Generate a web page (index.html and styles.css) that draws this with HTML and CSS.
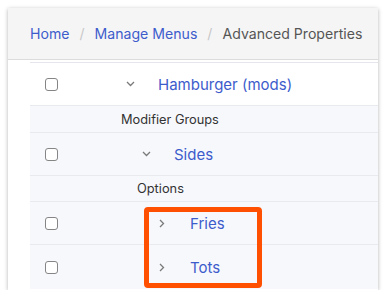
FILE: index.html
```html
<!DOCTYPE html>
<html lang="en">
<head>
    <meta charset="UTF-8">
    <meta name="viewport" content="width=device-width, initial-scale=1.0">
    <link rel="stylesheet" href="styles.css">
</head>
<body>

<div class="card">
    <div class="header">
        <a class="crumb" href="#">Home</a>
        <span class="sep">/</span>
        <a class="crumb" href="#">Manage Menus</a>
        <span class="sep">/</span>
        <span class="crumb current">Advanced Properties</span>
    </div>

    <div class="rows">
        <div class="row item white">
            <span class="check"></span>
            <span class="indent lvl0"></span>
            <span class="chev down"><svg width="9" height="6" viewBox="0 0 9 6"><path d="M1 1l3.5 3.5L8 1" fill="none" stroke="#7a7a7a" stroke-width="1.3"/></svg></span>
            <a class="name" href="#">Hamburger (mods)</a>
        </div>
        <div class="row label lvl0">Modifier Groups</div>
        <div class="row item">
            <span class="check"></span>
            <span class="indent lvl1"></span>
            <span class="chev down"><svg width="9" height="6" viewBox="0 0 9 6"><path d="M1 1l3.5 3.5L8 1" fill="none" stroke="#7a7a7a" stroke-width="1.3"/></svg></span>
            <a class="name" href="#">Sides</a>
        </div>
        <div class="row label lvl1">Options</div>
        <div class="row item">
            <span class="check"></span>
            <span class="indent lvl2"></span>
            <span class="chev"><svg width="6" height="9" viewBox="0 0 6 9"><path d="M1 1l3.5 3.5L1 8" fill="none" stroke="#7a7a7a" stroke-width="1.3"/></svg></span>
            <a class="name" href="#">Fries</a>
        </div>
        <div class="row item last">
            <span class="check"></span>
            <span class="indent lvl2"></span>
            <span class="chev"><svg width="6" height="9" viewBox="0 0 6 9"><path d="M1 1l3.5 3.5L1 8" fill="none" stroke="#7a7a7a" stroke-width="1.3"/></svg></span>
            <a class="name" href="#">Tots</a>
        </div>
    </div>

    <!-- resaltado -->
    <div class="highlight"></div>
</div>

</body>
</html>
```

FILE: styles.css
```css
body {
    margin: 0;
    background: #fff;
    font-family: 'Inter', 'Liberation Sans', sans-serif;
}

.card {
    position: relative;
    margin: 8px 0 0 8px;
    width: 370px;
    height: 282px;
    background: #fff;
    overflow: hidden;
    box-shadow: 0 1px 4px rgba(0, 0, 0, 0.3);
}

.header {
    height: 51px;
    background: #f5f5f6;
    border-bottom: 1px solid #dcdcdc;
    display: flex;
    align-items: center;
    padding-left: 22px;
    font-size: 14.1px;
    white-space: nowrap;
}

.crumb {
    color: #3d5ccc;
    text-decoration: none;
}

.crumb.current {
    color: #555;
}

.sep {
    color: #c8c8c8;
    margin: 0 10px;
}

.rows {
    margin: 2px 0 0 22px;
    border-top: 1px solid #e4e6ec;
}

.row {
    display: flex;
    align-items: center;
    background: #f7f8fc;
    border-bottom: 1px solid #e8eaf0;
}

.row.white {
    background: #fff;
}

.row.item {
    height: 42px;
    padding-left: 15px;
}

.row.last {
    border-bottom: none;
    height: 44px;
}

.row.label {
    height: 26px;
    font-size: 12.8px;
    color: #333;
}

.row.label.lvl0 {
    padding-left: 91px;
}

.row.label.lvl1 {
    padding-left: 107px;
    height: 25px;
}

.check {
    width: 11px;
    height: 11px;
    border: 1.5px solid #858585;
    border-radius: 3px;
    background: #fff;
    flex-shrink: 0;
}

.indent.lvl0 { width: 64px; }
.indent.lvl1 { width: 80px; }
.indent.lvl2 { width: 96px; }

.chev {
    width: 16px;
    display: flex;
    justify-content: center;
    align-items: center;
}

.name {
    margin-left: 20px;
    font-size: 15px;
    color: #3d5ccc;
    text-decoration: none;
}

.highlight {
    position: absolute;
    left: 136px;
    top: 199px;
    width: 108px;
    height: 71px;
    border: 5px solid #ff4f00;
    border-radius: 4px;
}
```
